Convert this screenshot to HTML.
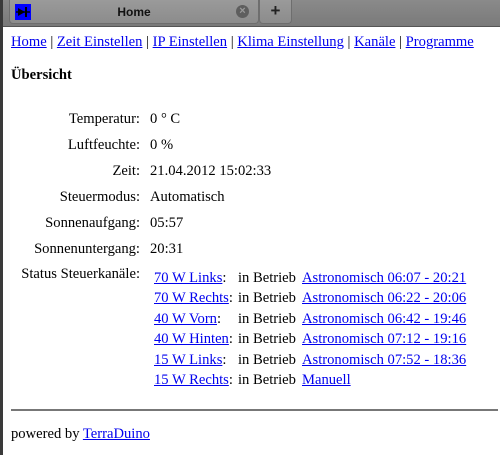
<!DOCTYPE html>
<html><head><style>
body{margin:0;width:500px;height:455px;overflow:hidden;background:#fff;font-family:"Liberation Serif",serif;font-size:14.6px;color:#000;position:relative}
.lb{position:absolute;left:0;top:0;width:3px;height:455px;background:#3a3a3a}
.tabbar{position:absolute;left:0;top:0;width:500px;height:26px;background:linear-gradient(#8a8a8a,#7a7a7a);border-bottom:1px solid #555}
.tab{position:absolute;left:9px;top:0;width:248px;height:23px;background:linear-gradient(#9a9a9a,#8c8c8c);border-radius:0 0 4px 4px;border:1px solid #6e6e6e;border-top:none}
.tab2{position:absolute;left:259px;top:0;width:31px;height:23px;background:linear-gradient(#9a9a9a,#8c8c8c);border-radius:0 0 4px 4px;border:1px solid #6e6e6e;border-top:none;text-align:center;font:bold 17px "Liberation Sans",sans-serif;line-height:22px;color:#222}
.icon{position:absolute;left:5px;top:4px;width:16px;height:16px;background:#00f}
.title{position:absolute;left:0;width:248px;top:5px;text-align:center;font:bold 12px "Liberation Sans",sans-serif;color:#111}
.close{position:absolute;left:226px;top:5px;width:13px;height:13px;border-radius:50%;background:#5e5e5e;color:#999;font:bold 11px "Liberation Sans",sans-serif;line-height:13px;text-align:center}
a{color:#00e;text-decoration:underline}
.t{position:absolute;white-space:nowrap}
.lbl{position:absolute;right:360px;white-space:nowrap}
.b{position:absolute;left:238px;white-space:nowrap}
.b a{position:absolute;left:64px}
hr{position:absolute;left:11px;top:409px;width:487px;margin:0;border:none;border-top:2px solid #777}
</style></head><body>
<div class="tabbar">
<div class="tab"><div class="icon"><svg width="16" height="16"><path d="M3 4L10 8L3 12Z" fill="#000"/><rect x="10" y="3" width="2" height="10" fill="#000"/><rect x="1" y="7.3" width="14" height="1.4" fill="#000"/></svg></div><div class="title">Home</div><div class="close">×</div></div>
<div class="tab2">+</div>
</div>
<div class="lb"></div>
<div class="t" style="left:11px;top:34px"><a>Home</a> | <a>Zeit Einstellen</a> | <a>IP Einstellen</a> | <a>Klima Einstellung</a> | <a>Kanäle</a> | <a>Programme</a></div>
<div class="t" style="left:11px;top:67px;font-weight:bold">Übersicht</div>
<div class="lbl" style="top:111px">Temperatur:</div><div class="t" style="left:150px;top:111px">0 ° C</div>
<div class="lbl" style="top:137px">Luftfeuchte:</div><div class="t" style="left:150px;top:137px">0 %</div>
<div class="lbl" style="top:163px">Zeit:</div><div class="t" style="left:150px;top:163px">21.04.2012 15:02:33</div>
<div class="lbl" style="top:189px">Steuermodus:</div><div class="t" style="left:150px;top:189px">Automatisch</div>
<div class="lbl" style="top:215px">Sonnenaufgang:</div><div class="t" style="left:150px;top:215px">05:57</div>
<div class="lbl" style="top:241px">Sonnenuntergang:</div><div class="t" style="left:150px;top:241px">20:31</div>
<div class="lbl" style="top:266px">Status Steuerkanäle:</div>
<div class="t" style="left:154px;top:270px"><a>70 W Links</a>:</div><div class="b" style="top:270px">in Betrieb <a>Astronomisch 06:07 - 20:21</a></div>
<div class="t" style="left:154px;top:290px"><a>70 W Rechts</a>:</div><div class="b" style="top:290px">in Betrieb <a>Astronomisch 06:22 - 20:06</a></div>
<div class="t" style="left:154px;top:311px"><a>40 W Vorn</a>:</div><div class="b" style="top:311px">in Betrieb <a>Astronomisch 06:42 - 19:46</a></div>
<div class="t" style="left:154px;top:331px"><a>40 W Hinten</a>:</div><div class="b" style="top:331px">in Betrieb <a>Astronomisch 07:12 - 19:16</a></div>
<div class="t" style="left:154px;top:352px"><a>15 W Links</a>:</div><div class="b" style="top:352px">in Betrieb <a>Astronomisch 07:52 - 18:36</a></div>
<div class="t" style="left:154px;top:372px"><a>15 W Rechts</a>:</div><div class="b" style="top:372px">in Betrieb <a>Manuell</a></div>
<hr>
<div class="t" style="left:11px;top:426px">powered by <a>TerraDuino</a></div>
</body></html>
